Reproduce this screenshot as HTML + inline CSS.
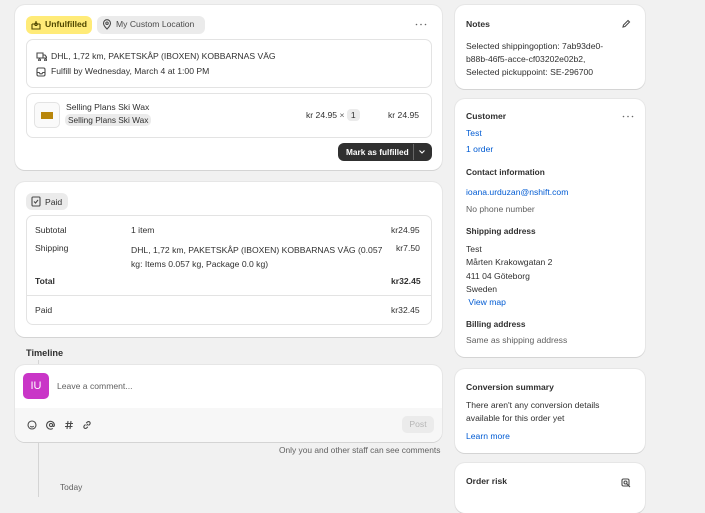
<!DOCTYPE html>
<html><head><style>
*{box-sizing:border-box;margin:0;padding:0}
body{width:705px;height:497px;overflow:hidden;background:#f1f1f1;font-family:"Liberation Sans",sans-serif;font-size:8.6px;color:#303030;position:relative}
.card{position:absolute;background:#fff;border-radius:10px;box-shadow:0 1px 0 #d4d4d4,0 0 0 1px #e6e6e6}
.a{position:absolute;white-space:nowrap}
.in{position:absolute;border:1px solid #e3e3e3;border-radius:7px}
.b{font-weight:bold}
.link{color:#005bd3}
.g{color:#616161}
svg{position:absolute;fill:none;stroke:#4a4a4a;stroke-width:1.1}
</style></head><body>

<div class="card" style="left:15px;top:5px;width:427px;height:165px">
  <div class="a" style="left:11px;top:11px;height:18px;width:66px;background:#ffeb78;border-radius:6px;"></div>
  <svg style="left:16px;top:15px" width="10" height="10" viewBox="0 0 10 10"><path d="M1 4v5h8V4M1 4h2.5l.8 1.5h1.4L6.5 4H9M5 1v3M3.8 2.8 5 4l1.2-1.2" stroke="#4f4700"/></svg>
  <div class="a b" style="left:30px;top:14px;color:#4f4700">Unfulfilled</div>
  <div class="a" style="left:82px;top:11px;height:18px;width:108px;background:#ebebeb;border-radius:6px"></div>
  <svg style="left:87px;top:14px" width="10" height="11" viewBox="0 0 10 11"><path d="M5 10C2 7 1.5 5.5 1.5 4.2a3.5 3.5 0 0 1 7 0C8.5 5.5 8 7 5 10z"/><circle cx="5" cy="4.2" r="1.2"/></svg>
  <div class="a" style="left:101px;top:14px;color:#4a4a4a">My Custom Location</div>
  <svg style="left:400px;top:18px" width="12" height="3" viewBox="0 0 12 3"><circle cx="1.5" cy="1.5" r=".8" fill="#666" stroke="none"/><circle cx="6" cy="1.5" r=".8" fill="#666" stroke="none"/><circle cx="10.5" cy="1.5" r=".8" fill="#666" stroke="none"/></svg>
  <div class="in" style="left:11px;top:34px;width:406px;height:49px"></div>
  <svg style="left:21px;top:47px" width="11" height="9" viewBox="0 0 11 9"><path d="M1 1h6v5H1zM7 3h2l1.5 2v1H7M2.5 8a1 1 0 1 0 0-.1M8.5 8a1 1 0 1 0 0-.1"/></svg>
  <div class="a" style="left:36px;top:46px">DHL, 1,72 km, PAKETSKÅP (IBOXEN) KOBBARNAS VÄG</div>
  <svg style="left:21px;top:62px" width="10" height="10" viewBox="0 0 10 10"><rect x="1" y="1" width="8" height="8" rx="1.5"/><path d="M1 5.5h2.2l.8 1.3h2l.8-1.3H9"/></svg>
  <div class="a" style="left:36px;top:61px">Fulfill by Wednesday, March 4 at 1:00 PM</div>
  <div class="in" style="left:11px;top:88px;width:406px;height:45px"></div>
  <div class="a" style="left:19px;top:97px;width:26px;height:26px;border:1px solid #e3e3e3;border-radius:5px;background:#fafafa"></div>
  <div class="a" style="left:26px;top:107px;width:12px;height:7px;background:#b8860b"></div>
  <div class="a" style="left:51px;top:97px">Selling Plans Ski Wax</div>
  <div class="a" style="left:50px;top:109px;background:#ebebeb;border-radius:5px;padding:1px 3px;font-size:8.3px">Selling Plans Ski Wax</div>
  <div class="a" style="left:291px;top:105px">kr 24.95 <span class="g">×</span> <span style="background:#ebebeb;border-radius:4px;padding:1px 4px">1</span></div>
  <div class="a" style="left:373px;top:105px">kr 24.95</div>
  <div class="a b" style="left:323px;top:138px;width:94px;height:18px;background:#303030;border-radius:6px;color:#fff;padding:4px 0 0 8px;font-size:8.3px">Mark as fulfilled</div>
  <div class="a" style="left:398px;top:139px;width:1px;height:16px;background:#666"></div>
  <svg style="left:403px;top:144px" width="8" height="6" viewBox="0 0 8 6"><path d="M1.5 1.5 4 4l2.5-2.5" stroke="#fff"/></svg>
</div>

<div class="card" style="left:15px;top:182px;width:427px;height:155px">
  <div class="a" style="left:11px;top:11px;height:17px;width:42px;background:#ebebeb;border-radius:6px"></div>
  <svg style="left:16px;top:14px" width="10" height="11" viewBox="0 0 10 11"><rect x="1" y="1" width="8" height="9" rx="1"/><path d="M3 5.5l1.5 1.5L7 4"/></svg>
  <div class="a" style="left:30px;top:15px">Paid</div>
  <div class="in" style="left:11px;top:33px;width:406px;height:110px"></div>
  <div class="a" style="left:20px;top:43px">Subtotal</div>
  <div class="a" style="left:116px;top:43px">1 item</div>
  <div class="a" style="left:376px;top:43px">kr24.95</div>
  <div class="a" style="left:20px;top:61px">Shipping</div>
  <div class="a" style="left:116px;top:61px;line-height:14px">DHL, 1,72 km, PAKETSKÅP (IBOXEN) KOBBARNAS VÄG (0.057<br>kg: Items 0.057 kg, Package 0.0 kg)</div>
  <div class="a" style="left:381px;top:61px">kr7.50</div>
  <div class="a b" style="left:20px;top:94px">Total</div>
  <div class="a b" style="left:376px;top:94px">kr32.45</div>
  <div class="a" style="left:12px;top:113px;width:404px;height:1px;background:#e3e3e3"></div>
  <div class="a" style="left:20px;top:123px">Paid</div>
  <div class="a" style="left:376px;top:123px">kr32.45</div>
</div>

<div class="a b" style="left:26px;top:348px;font-size:9.2px">Timeline</div>
<div class="a" style="left:38px;top:360px;width:1px;height:137px;background:#d4d4d4"></div>
<div class="card" style="left:15px;top:365px;width:427px;height:77px;overflow:hidden">
  <div class="a" style="left:0;top:43px;width:427px;height:34px;background:#f7f7f7"></div>
  <div class="a" style="left:8px;top:8px;width:26px;height:26px;background:#c935c7;border-radius:5px;color:#fff;font-size:11px;text-align:center;line-height:26px">IU</div>
  <div class="a g" style="left:42px;top:16px">Leave a comment...</div>
  <svg style="left:12px;top:55px" width="10" height="10" viewBox="0 0 10 10"><circle cx="5" cy="5" r="4"/><path d="M3.3 6.2c1 1 2.4 1 3.4 0"/></svg>
  <svg style="left:31px;top:55px" width="10" height="10" viewBox="0 0 10 10"><circle cx="5" cy="5" r="1.6"/><path d="M6.6 4v1.8c0 1 1.8 1 1.8-.8A3.9 3.9 0 1 0 6.8 8.4"/></svg>
  <svg style="left:49px;top:55px" width="10" height="10" viewBox="0 0 10 10"><path d="M4 1 3 9M7 1 6 9M1.5 3.5h7.5M1 6.5h7.5"/></svg>
  <svg style="left:67px;top:55px" width="10" height="10" viewBox="0 0 10 10"><path d="M4.5 5.5 6 4M3.5 4.5l-1.2 1.2a1.6 1.6 0 0 0 2.3 2.3L5.8 6.8M6.5 5.5l1.2-1.2a1.6 1.6 0 0 0-2.3-2.3L4.2 3.2"/></svg>
  <div class="a" style="left:387px;top:51px;width:32px;height:17px;background:#ebebeb;border-radius:5px;color:#b5b5b5;text-align:center;line-height:17px">Post</div>
</div>
<div class="a g" style="left:279px;top:445px;font-size:8.4px">Only you and other staff can see comments</div>
<div class="a g" style="left:60px;top:482px;font-size:8.4px">Today</div>

<div class="card" style="left:455px;top:5px;width:190px;height:84px">
  <div class="a b" style="left:11px;top:14px">Notes</div>
  <svg style="left:166px;top:14px" width="10" height="10" viewBox="0 0 10 10"><path d="M2 8l.5-2L7 1.5 8.5 3 4 7.5z"/></svg>
  <div class="a" style="left:11px;top:35px;line-height:13px">Selected shippingoption: 7ab93de0-<br>b88b-46f5-acce-cf03202e02b2,<br>Selected pickuppoint: SE-296700</div>
</div>
<div class="card" style="left:455px;top:99px;width:190px;height:258px">
  <div class="a b" style="left:11px;top:12px">Customer</div>
  <svg style="left:167px;top:16px" width="12" height="3" viewBox="0 0 12 3"><circle cx="1.5" cy="1.5" r=".8" fill="#666" stroke="none"/><circle cx="6" cy="1.5" r=".8" fill="#666" stroke="none"/><circle cx="10.5" cy="1.5" r=".8" fill="#666" stroke="none"/></svg>
  <div class="a link" style="left:11px;top:29px">Test</div>
  <div class="a link" style="left:11px;top:45px">1 order</div>
  <div class="a b" style="left:11px;top:68px;font-size:8.3px">Contact information</div>
  <div class="a link" style="left:11px;top:88px">ioana.urduzan@nshift.com</div>
  <div class="a g" style="left:11px;top:105px">No phone number</div>
  <div class="a b" style="left:11px;top:127px;font-size:8.3px">Shipping address</div>
  <div class="a" style="left:11px;top:144px;line-height:13.3px">Test<br>Mårten Krakowgatan 2<br>411 04 Göteborg<br>Sweden<br><span class="link">&nbsp;View map</span></div>
  <div class="a b" style="left:11px;top:220px;font-size:8.3px">Billing address</div>
  <div class="a g" style="left:11px;top:236px">Same as shipping address</div>
</div>
<div class="card" style="left:455px;top:369px;width:190px;height:84px">
  <div class="a b" style="left:11px;top:13px">Conversion summary</div>
  <div class="a" style="left:11px;top:30px;line-height:13px">There aren't any conversion details<br>available for this order yet</div>
  <div class="a link" style="left:11px;top:62px">Learn more</div>
</div>
<div class="card" style="left:455px;top:463px;width:190px;height:50px">
  <div class="a b" style="left:11px;top:13px">Order risk</div>
  <svg style="left:166px;top:15px" width="10" height="10" viewBox="0 0 10 10"><rect x="1" y="1" width="7" height="7" rx="1.5"/><circle cx="4.5" cy="4.5" r="1.5"/><path d="M5.6 5.6 9 9"/></svg>
</div>
</body></html>
